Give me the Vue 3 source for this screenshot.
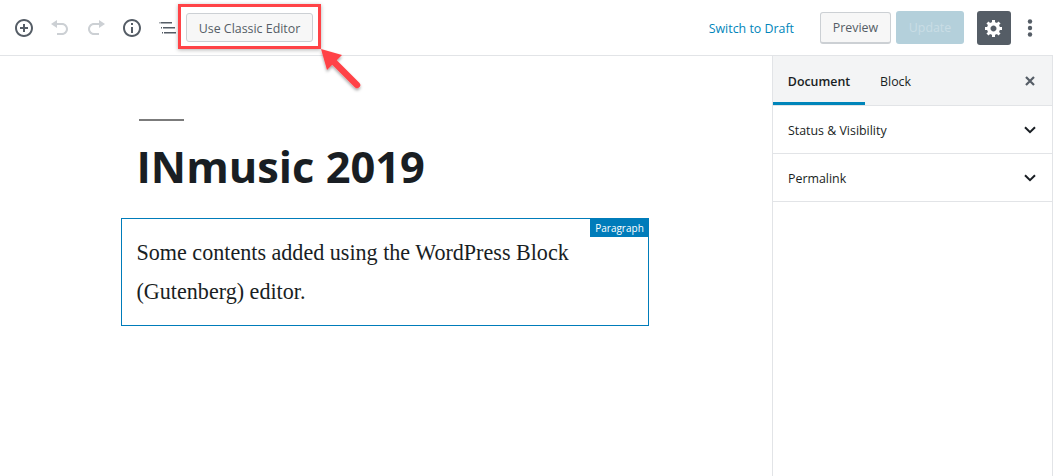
<script setup>
const rows = ['Status & Visibility', 'Permalink']
</script>

<template>
  <div class="page">
    <header class="bar">
      <div class="tools">
        <svg class="ico" viewBox="0 0 20 20"><path fill="#555d66" d="M10 1c-5 0-9 4-9 9s4 9 9 9 9-4 9-9-4-9-9-9zm0 16c-3.9 0-7-3.1-7-7s3.1-7 7-7 7 3.1 7 7-3.1 7-7 7zm1-11H9v3H6v2h3v3h2v-3h3V9h-3V6z"/></svg>
        <svg class="ico" viewBox="0 0 20 20"><path fill="#ccd0d4" d="M12 5H7V2L1 6l6 4V7h5c2.2 0 4 1.8 4 4s-1.8 4-4 4H7v2h5c3.3 0 6-2.7 6-6s-2.7-6-6-6z"/></svg>
        <svg class="ico" viewBox="0 0 20 20"><path fill="#ccd0d4" d="M8 5h5V2l6 4-6 4V7H8c-2.2 0-4 1.8-4 4s1.8 4 4 4h5v2H8c-3.3 0-6-2.7-6-6s2.7-6 6-6z"/></svg>
        <svg class="ico" viewBox="0 0 20 20"><path fill="#555d66" d="M10 1c-5 0-9 4-9 9s4 9 9 9 9-4 9-9-4-9-9-9zm0 16c-3.9 0-7-3.1-7-7s3.1-7 7-7 7 3.1 7 7-3.1 7-7 7zM9 9h2v6H9zm0-4h2v2H9z"/></svg>
        <svg class="ico list" viewBox="0 0 20 20"><path fill="#555d66" d="M3 4h11v1.6H3zM5 9h12v1.6H5zM6 14h12v1.6H6zM1.5 4h1v1.6h-1zM3 9h1v1.6H3zM4 14h1v1.6H4z"/></svg>
        <button class="classic">Use Classic Editor</button>
      </div>
      <div class="actions">
        <a class="draft">Switch to Draft</a>
        <button class="preview">Preview</button>
        <button class="update">Update</button>
        <button class="gear">
          <svg viewBox="0 0 20 20" width="20" height="20"><path fill="#fff" d="M18 12h-2.18c-.17.7-.44 1.35-.81 1.93l1.54 1.54-2.1 2.1-1.54-1.54c-.58.36-1.23.63-1.91.79V19H8v-2.18c-.68-.16-1.33-.43-1.91-.79l-1.54 1.54-2.12-2.12 1.54-1.54c-.36-.58-.63-1.23-.79-1.91H1V9.03h2.17c.16-.7.44-1.35.8-1.94L2.43 5.55l2.1-2.1 1.54 1.54c.58-.37 1.24-.64 1.93-.81V2h3v2.18c.68.16 1.33.43 1.91.79l1.54-1.54 2.12 2.12-1.54 1.54c.36.59.64 1.24.8 1.94H18V12zm-8.5 1.5c1.66 0 3-1.34 3-3s-1.34-3-3-3-3 1.34-3 3 1.34 3 3 3z"/></svg>
        </button>
        <svg class="more" viewBox="0 0 6 20" width="6" height="20"><circle cx="3" cy="3.5" r="2.2"/><circle cx="3" cy="10" r="2.2"/><circle cx="3" cy="16.5" r="2.2"/></svg>
      </div>
    </header>

    <div class="body">
      <main class="editor">
        <div class="rule"></div>
        <h1>INmusic 2019</h1>
        <div class="block">
          <span class="tag">Paragraph</span>
          <p>Some contents added using the WordPress Block (Gutenberg) editor.</p>
        </div>
      </main>
      <aside class="side">
        <div class="tabs">
          <span class="tab on">Document</span>
          <span class="tab">Block</span>
          <svg class="close" viewBox="0 0 12 12" width="12" height="12"><path d="M2 2l8 8M10 2l-8 8" stroke="#555d66" stroke-width="2.2" fill="none"/></svg>
        </div>
        <div v-for="r in rows" :key="r" class="row">
          <span>{{ r }}</span>
          <svg viewBox="0 0 12 8" width="12" height="8"><path d="M1 1.2l5 5 5-5" stroke="#191e23" stroke-width="2" fill="none"/></svg>
        </div>
      </aside>
    </div>

    <div class="redbox"></div>
    <svg class="arrow" viewBox="0 0 60 60" width="60" height="60">
      <defs>
        <filter id="sh" x="-30%" y="-30%" width="160%" height="160%"><feDropShadow dx="0" dy="2" stdDeviation="1.5" flood-color="#000" flood-opacity=".35"/></filter>
      </defs>
      <g filter="url(#sh)">
        <path fill="#ff4347" d="M10 9L31 15 16 30z"/>
        <path d="M22 21L46 45" stroke="#ff4347" stroke-width="6.5" stroke-linecap="round" fill="none"/>
      </g>
    </svg>
  </div>
</template>

<style>
html, body { margin: 0; background: #fff; }
</style>

<style scoped>
.page { position: relative; width: 1053px; height: 476px; overflow: hidden; font-family: "Open Sans", "Noto Sans", sans-serif; color: #191e23; background: #fff; }
.bar { height: 55px; border-bottom: 1px solid #e2e4e7; display: flex; justify-content: space-between; align-items: center; box-sizing: content-box; }
.tools { display: flex; align-items: center; padding-left: 14px; }
.ico { width: 20px; height: 20px; margin-right: 16px; flex: none; }
.list { margin-right: 0; }
.classic { margin-left: 8px; width: 127px; height: 29px; border: 1px solid #ccd0d4; border-radius: 3px; background: #f7f7f7; color: #555d66; font: 12.4px "Open Sans", sans-serif; padding: 1px 0 0; }
.actions { display: flex; align-items: center; padding-right: 20px; }
.draft { color: #0085ba; font-size: 12.4px; margin: 1px 26px 0 0; }
.preview { width: 71px; height: 32px; box-sizing: border-box; border: 1px solid #ccd0d4; border-bottom-width: 2px; border-radius: 3px; background: #f7f7f7; color: #555d66; font: 12.4px "Open Sans", sans-serif; padding: 0; margin-right: 5px; }
.update { width: 68px; height: 33px; border: 0; border-radius: 3px; background: #b4d0db; color: #c9dde5; font: 12.4px "Open Sans", sans-serif; padding: 0; margin-right: 13px; }
.gear { width: 34px; height: 34px; border: 0; border-radius: 3px; background: #555d66; display: flex; align-items: center; justify-content: center; padding: 0; margin-right: 16px; }
.more { fill: #555d66; flex: none; }
.body { display: flex; height: 420px; }
.editor { width: 772px; flex: none; box-sizing: border-box; padding: 63px 0 0 121px; }
.rule { width: 45px; height: 2px; background: #7b7b7b; margin-left: 18px; }
h1 { margin: 16px 0 0 15.5px; font-size: 43.4px; line-height: 60px; font-weight: 700; color: #191e23; font-family: "Open Sans", sans-serif; }
.block { position: relative; margin-top: 21px; width: 528px; height: 108px; box-sizing: border-box; border: 1px solid #007cba; padding: 14px 15px 0 14.5px; }
.tag { position: absolute; top: -1px; right: -1px; width: 59px; height: 19px; background: #007cba; color: #fff; font-size: 10px; font-weight: 500; line-height: 20px; text-align: center; }
p { margin: 0; font: 22.1px/39px "Liberation Serif", serif; color: #191e23; }
.side { flex: 1; border-left: 1px solid #e2e4e7; border-right: 1px solid #e2e4e7; }
.tabs { height: 49px; background: #f3f4f5; border-bottom: 1px solid #e2e4e7; display: flex; align-items: stretch; position: relative; }
.tab { width: 92px; font-size: 12.4px; line-height: 52px; text-align: center; color: #191e23; }
.tab.on { font-weight: 600; height: 46px; border-bottom: 3px solid #0085ba; }
.tab:nth-child(2) { width: auto; margin-left: 15px; }
.close { position: absolute; right: 16px; top: 19px; }
.row { height: 47px; border-bottom: 1px solid #e2e4e7; display: flex; align-items: center; justify-content: space-between; padding: 0 16px 0 15px; font-size: 12.4px; font-weight: 500; color: #191e23; }
.row span { margin-top: 2px; }
.redbox { position: absolute; left: 178px; top: 4px; width: 143px; height: 45px; box-sizing: border-box; border: 3px solid #ff4347; box-shadow: 0 1px 4px rgba(0,0,0,.3); }
.arrow { position: absolute; left: 311px; top: 40px; }
</style>
